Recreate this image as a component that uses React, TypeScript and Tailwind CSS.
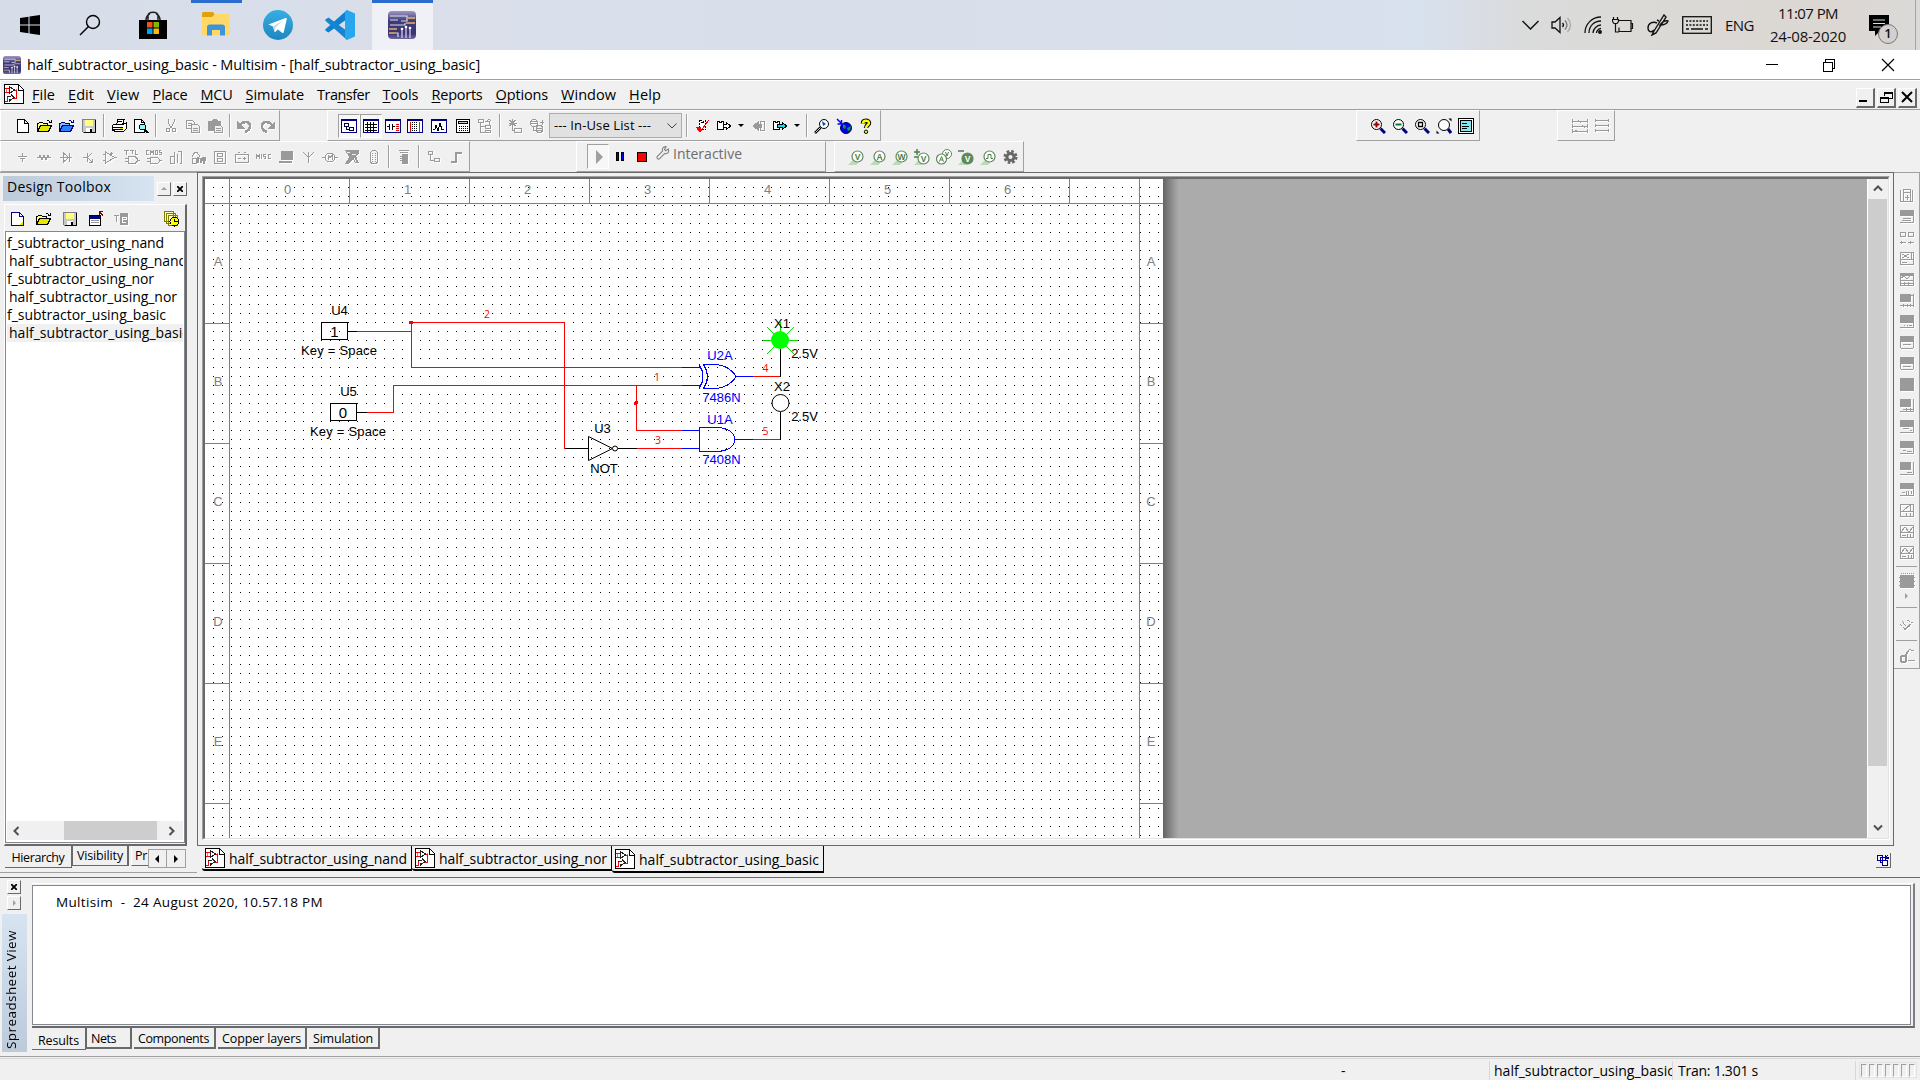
import { useLayoutEffect, useRef, useState, type ReactNode } from "react";

/* ---------- text fitted to a fixed run length ---------- */
function Label({ w, children, className = "", vertical = false }: { w: number; children: string; className?: string; vertical?: boolean }) {
  const ref = useRef<HTMLSpanElement>(null);
  const [spacing, setSpacing] = useState(0);
  useLayoutEffect(() => {
    const el = ref.current;
    if (!el) return;
    el.style.letterSpacing = "0px";
    const box = el.getBoundingClientRect();
    setSpacing((w - (vertical ? box.height : box.width)) / children.length);
  }, [w, children, vertical]);
  return (
    <span ref={ref} className={`inline-block whitespace-pre ${className}`} style={{ letterSpacing: `${spacing}px` }}>
      {children}
    </span>
  );
}

/* ---------- icon primitives ---------- */
const G = "#9a9a9a";
function Svg({ children, size = 16, soft = false, off = false }: { children: ReactNode; size?: number; soft?: boolean; off?: boolean }) {
  return (
    <svg
      width={size}
      height={size}
      viewBox="0 0 16 16"
      fill="none"
      stroke="#000"
      shapeRendering={soft ? "auto" : "crispEdges"}
      className={off ? "shrink-0 drop-shadow-[1px_1px_0_#fff]" : "shrink-0"}
    >
      {children}
    </svg>
  );
}

const icons: Record<string, ReactNode> = {
  new: <Svg><path d="M2.5 1.5h7l4 4v9h-11zM9.5 1.5v4h4" fill="#fff" /></Svg>,
  open: <Svg><path d="M.5 13.5v-8h1l1-1h3l1 1h4v2" fill="#ffff80" /><path d="M.5 13.5l3-6h11l-3 6z" fill="#e6e600" /><path d="M9.500 2.500h2l2 2M14.500 1.500v3h-3" /></Svg>,
  openBlue: <Svg><path d="M.5 13.500v-8h1l1-1h3l1 1h4v2" fill="#80c0ff" stroke="#000080" /><path d="M.5 13.500l3-6h11l-3 6z" fill="#2a80ff" stroke="#000080" /><path d="M9.500 2.500h2l2 2M14.500 1.500v3h-3" stroke="#000080" /></Svg>,
  save: <Svg><path d="M1.500 1.500h13v13h-12l-1-1z" fill="#c8c8c8" stroke="#808080" /><path d="M4 2h8v6H4z" fill="#ffff80" stroke="none" /><path d="M5 10h6v4H5z" fill="#fff" stroke="none" /><path d="M9 11h2v3H9z" fill="#000" stroke="none" /><path d="M14.500 2v12.500H3" /></Svg>,
  print: <Svg><path d="M5.500 6.500l1.500-5h6l-1.500 5M1.500 7.500l2-1.500h9l2.500-1v6l-2 2h-9l-2.500-1z" fill="#fff" /><path d="M2 9.500h10M2 11.500h10" strokeWidth="1.500" /><path d="M9 10.500h3" stroke="#e6e600" /><path d="M3 13.500h9l2-1M7 3.500h4" /></Svg>,
  preview: <Svg><path d="M1.500 1.500h7l3 3v10h-10z" fill="#fff" /><path d="M8.500 1.500v3h3" /><circle cx="9.500" cy="9" r="3" fill="#80ffff" /><path d="M11.500 11.500l4 3.500" strokeWidth="2" /></Svg>,
  cut: <Svg off><g stroke={G}><path d="M5 1v3l2 4 2 2M11 1v3l-2 4-2 2" /><circle cx="5" cy="12" r="2" /><circle cx="11" cy="12" r="2" /></g></Svg>,
  copy: <Svg off><g stroke={G}><path d="M1.500 2.500h6l2 2v6h-8zM3 5.500h4M3 7.500h4" /><path d="M6.500 6.500h6l2 2v6h-8zM8 10.500h5M8 12.500h5" fill="#f0f0f0" /></g></Svg>,
  paste: <Svg off><path d="M1 3h3l2-2h3l2 2h3v4H7v6H1z" fill={G} stroke="none" /><path d="M7.500 7.500h6l2 2v5h-8zM9 10.500h5M9 12.500h5" fill="#f0f0f0" stroke={G} /></Svg>,
  undo: <Svg off><path d="M3 7c3-4 10-4 10 1 0 3-2 5-5 6" stroke={G} strokeWidth="2.500" /><path d="M0 3v8h8z" fill={G} stroke="none" /></Svg>,
  redo: <Svg off><path d="M13 7C10 3 3 3 3 8c0 3 2 5 5 6" stroke={G} strokeWidth="2.500" /><path d="M16 3v8H8z" fill={G} stroke="none" /></Svg>,
  hier: <Svg><rect x=".5" y="1.500" width="15" height="13" fill="#fff" stroke="#000080" /><path d="M1 2.500h14" stroke="#000080" /><path d="M3.500 5.500h4v3h-4zM8.500 9.500h4v3h-4zM5.500 9v2.500h3" stroke="#000040" /></Svg>,
  grid: <Svg><rect x=".5" y="1.500" width="15" height="13" fill="#fff" stroke="#000080" /><path d="M1 2.500h14" stroke="#000080" /><path d="M2 6.500h12M2 9.500h12M2 12.500h12M4.500 4v10M7.500 4v10M10.500 4v10" /></Svg>,
  spice: <Svg><rect x=".5" y="1.500" width="15" height="13" fill="#fff" stroke="#000080" /><path d="M1 2.500h14" stroke="#000080" /><path d="M2 8.500h2M4.500 5.500v6M7.500 5.500v6M8 8.500h2" /><path d="M11 6.500h3M11 8.500h3M11 10.500h3M11 12.500h3" stroke="#e00000" /></Svg>,
  bread: <Svg><rect x=".5" y="1.500" width="15" height="13" fill="#fff" stroke="#000080" /><path d="M1 2.500h14" stroke="#000080" /><path d="M5.500 4v10M7.500 4v10M9.500 4v10" strokeDasharray="1 1" /><path d="M3.500 4v10" stroke="#e00000" /><path d="M12.500 4v10" stroke="#008080" /></Svg>,
  chart: <Svg><rect x=".5" y="1.500" width="15" height="13" fill="#fff" stroke="#000080" /><path d="M1 2.500h14" stroke="#000080" /><path d="M2 11.500h2l1-4 2 5 2-7 2 6h2" /></Svg>,
  calc: <Svg><rect x="1.500" y="1.500" width="13" height="13" fill="#fff" /><path d="M3.500 3.500h9v2h-9z" fill="#ccc" /><path d="M4 8.500h9M4 10.500h9M4 12.500h9" strokeDasharray="1 1" /></Svg>,
  tree: <Svg off><g stroke={G}><path d="M1.500 1.500h5v3h-5zM8.500 7.500h5v3h-5zM8.500 12.500h5v2h-5zM3.500 5v9h5M4 8.500h4M8 3.500h4v3M10 3l2-2 2 2" /></g></Svg>,
  star: <Svg off><g stroke={G}><path d="M5.500 1v8M1.500 5h8M2.500 2l6 6M8.500 2l-6 6M7.500 10.500h7v4h-7zM5.500 9v3.500h2" /></g></Svg>,
  db: <Svg off><g stroke={G}><circle cx="5" cy="5" r="3.500" /><path d="M2 5.500h6M2 3.500h6M11 4h4M13 1.500v5M4.500 9v3h3" /><circle cx="10.500" cy="11" r="3.500" fill="#f0f0f0" /><path d="M7 10.500h7M8 12.500h5" /></g></Svg>,
  erc: <Svg><path d="M5.500 2.500h2v2h2v-2h2v9h-6z" fill="#fff" strokeDasharray="2 1" /><path d="M4 11l2 3 9-12" stroke="#f00" /><path d="M2 9h5v2l-2 3z" fill="#f00" stroke="none" /></Svg>,
  fwd: <Svg><path d="M1.500 3.500h2v1h2v-1h2v3h3v-2l4 3.500-4 3.500v-2h-3v2h-6z" fill="#fff" /><path d="M7.500 6v5" /></Svg>,
  back: <Svg off><path d="M10.500 3.500h4v9h-4z" stroke={G} /><path d="M9 3v3h3v4H9v3L2 8z" fill={G} stroke="none" /></Svg>,
  fwdCyan: <Svg><path d="M1.500 3.500h2v1h2v-1h2v8h-6z" fill="#fff" /><path d="M5.500 6.500h5v-2l4 3.500-4 3.500v-2h-5z" fill="#00e5ff" /></Svg>,
  find: <Svg soft><circle cx="10" cy="6" r="4.500" fill="#fff" /><path d="M6.500 9.500L1 15" strokeWidth="2.500" /><path d="M6 10L1.500 14.500" stroke="#fff" strokeWidth=".8" /><path d="M8 3l4 3-3 2z" fill="#0050c0" stroke="none" /></Svg>,
  globe: <Svg soft><circle cx="10" cy="10" r="5.500" fill="#0000e0" stroke="#000060" /><path d="M7 6l3 2-1 3-2-1zM11 10l4-2-1 4-2 1z" fill="#00a040" stroke="none" /><path d="M1 1l4 4M5.500 2v4h-4" stroke="#00f" strokeWidth="1.500" /></Svg>,
  help: <Svg soft><path d="M5 5.500C5 2 11 2 11 5c0 2-3 2-3 5" stroke="#000" strokeWidth="4.500" /><path d="M5 5.500C5 2 11 2 11 5c0 2-3 2-3 5" stroke="#ff0" strokeWidth="2.500" /><circle cx="8" cy="13.800" r="1.700" fill="#ff0" stroke="#000" /></Svg>,
  zin: <Svg soft><circle cx="6.500" cy="6.500" r="5" fill="#fff" /><path d="M10.500 10.500l4.500 4.500" stroke="#000080" strokeWidth="3" /><path d="M3.500 6.500h6M6.500 3.500v6" stroke="#a00000" strokeWidth="2" /></Svg>,
  zout: <Svg soft><circle cx="6.500" cy="6.500" r="5" fill="#fff" /><path d="M10.500 10.500l4.500 4.500" stroke="#000080" strokeWidth="3" /><path d="M3.500 6.500h6" stroke="#008020" strokeWidth="2" /></Svg>,
  zarea: <Svg soft><circle cx="6.500" cy="6.500" r="5" fill="#fff" /><path d="M10.500 10.500l4.500 4.500" stroke="#000080" strokeWidth="3" /><path d="M4.500 4.500h4v4h-4z" strokeWidth="1.300" /></Svg>,
  zfit: <Svg soft><circle cx="8" cy="7" r="5.500" fill="#fff" /><path d="M12 11l3 4" stroke="#000080" strokeWidth="3" /><path d="M12.500.5h3v3zM.5 12.500v3h3z" fill="#000" stroke="none" /></Svg>,
  full: <Svg><rect x=".5" y=".5" width="15" height="15" fill="#fff" /><rect x="2.500" y="2.500" width="11" height="11" fill="#80e8f0" /><path d="M4 5.500h5M4 8h7M4 10.500h5" /></Svg>,
  conn1: <Svg off><path d="M.5 1v4M.5 3h15M15.500 1v4M.5 6v4M.5 8h15M15.500 6v4M.5 11v4M.5 13h15M15.500 11v4M6 2l3 3M10 7l3 3M3 12l3 2" stroke={G} /></Svg>,
  conn2: <Svg off><path d="M1.500 1v3M2 2.500h12M14.500 1v3M1.500 6v3M2 7.500h12M14.500 6v3M1.500 11v3M2 12.500h12M14.500 11v3" stroke={G} /></Svg>,
  src: <Svg off><path d="M8.500 4v3M4 7.500h9M6 9.500h5M8.500 10v3" stroke={G} /></Svg>,
  res: <Svg off><path d="M1 8.500h2l1-2 2 4 2-4 2 4 2-4 1 2h2" stroke={G} /></Svg>,
  diode: <Svg off><path d="M2 8.500h12M5.500 4v9l5-4.500zM11.500 4v9" stroke={G} /></Svg>,
  bjt: <Svg off><path d="M3 8.500h4M7.500 4v9M8 8l4-4M8 9l4 4M9 13h3v-3" stroke={G} /></Svg>,
  opamp: <Svg off><path d="M3.500 3v11l9-5.500zM1 5.500h2M1 11.500h2M12 8.500h3M9.500 3v3M8 4.500h3" stroke={G} /></Svg>,
  ttl: <Svg off><path d="M0 1.500h5M2.500 2v4M6 1.500h4M8.500 2v3M11.500 1v4h2M4.500 7.500h5c5 0 5 7 0 7h-5zM1 9.500h3M1 12.500h3M13 11h3" stroke={G} /></Svg>,
  cmos: <Svg off><path d="M3 1.500H.5v4H3M4.500 6V1.500l1.500 2 1.500-2V6M9.500 1.500h2v4h-2zM15 1.500h-2v2h2v2h-2M4.500 8.500h5c5 0 5 6 0 6h-5zM1 9.500h3M1 12.500h3M13 11h3" stroke={G} /></Svg>,
  misc1: <Svg off><path d="M2.500 7.500h4v7h-4zM6.500 3v11M9.500 14V5M9.500 2.500h4v12h-2" stroke={G} strokeWidth="1.500" /></Svg>,
  mixed: <Svg off><path d="M2 8l3-5h2l3 5" stroke={G} /><path d="M2.500 9.500h4v5h-4zM8 8v6M8 9.500h3V14M13 8v3h2V8M14 11v4" stroke={G} strokeWidth="1.500" /></Svg>,
  ind: <Svg off><path d="M2.500 2.500h11v12h-11zM5.500 4.500h5v3h-5zM5.500 9.500h5v3h-5z" stroke={G} /></Svg>,
  power: <Svg off><path d="M1.500 5.500h13v8h-13zM4 3.500h2M10 3.500h2M4 9.500h3M9 9.500h3M10.500 8v3" stroke={G} /></Svg>,
  misc: <Svg off><path d="M.5 10V5.500l1.500 2 1.500-2V10M5.500 5v5M9.500 5.500h-2v2h2v2h-2M15 5.500h-3v4h3" stroke={G} /></Svg>,
  lcd: <Svg off><path d="M3 2h12v9H3zM1 12h13v2H1z" fill={G} stroke="none" /></Svg>,
  rf: <Svg off><path d="M8.500 3v11M3 3l5 5M14 3L9 8" stroke={G} /></Svg>,
  motor: <Svg off><circle cx="8" cy="8.500" r="4.500" stroke={G} /><path d="M0 8.500h3M13 8.500h3M6 11V6.500l2 2 2-2V11" stroke={G} /></Svg>,
  conn: <Svg off><path d="M1 1h14v3l-3 3 3 7h-4l-2-4-5 5H1l4-7z" fill={G} stroke="none" /><path d="M3 3.500h3M8 5.500h4M10 9l2 4" stroke="#f0f0f0" /></Svg>,
  plug: <Svg off><rect x="4.500" y="1.500" width="7" height="13" rx="3" stroke={G} /><path d="M6.500 4v9M9.500 4v9" strokeDasharray="1 1" stroke={G} /></Svg>,
  mcu: <Svg off><path d="M3 1.500h10M4 3.500h8M6 5h5v9H6z" fill={G} stroke={G} /><path d="M4 7.500h8M4 9.500h8M4 11.500h8" stroke={G} /></Svg>,
  block: <Svg off><path d="M2.500 2.500h4v3h-4zM8.500 9.500h5v3h-5zM4.500 6v5h4" stroke={G} /></Svg>,
  bus: <Svg off><path d="M3 13h5V4h6" stroke={G} strokeWidth="2" /></Svg>,
  wrench: <Svg soft><path d="M14 3.500l-3 2-1.500-1.500L11.500 1C8 .5 6.500 3.500 7.500 6L1.500 12c-1 1.500 1 3.500 2.500 2.500L10 8.500c3 1 5.500-1.500 4-5z" stroke="#808080" strokeWidth="1.200" /></Svg>,
};

function Probe({ t, extra }: { t: string; extra?: string }) {
  const solid = extra === "f";
  return (
    <Svg soft>
      <path d="M0 16l6-6 4 4-2 2z" fill="#b9dcb4" stroke="none" />
      <circle cx="9.500" cy={extra ? 9.5 : 7.5} r="5.500" fill={solid ? "#5b8a57" : "#fff"} stroke="#5f8a5a" strokeWidth="1.200" />
      {extra && <path d={solid ? "M0 2h6" : "M0 3h6M3 0v6M0 8h4"} stroke="#4d7d48" strokeWidth="1.500" />}
      <text x="9.500" y={extra ? 12.6 : 10.6} textAnchor="middle" fontSize="8.500" fontWeight="700" fontFamily="Liberation Sans, sans-serif" stroke="none" fill={solid ? "#fff" : "#4d7d48"}>{t}</text>
    </Svg>
  );
}

const Cell = ({ name }: { name: string }) => <div className="flex h-full w-[22px] shrink-0 items-center justify-center">{icons[name]}</div>;
const Cells = ({ names }: { names: string }) => <>{names.split(" ").map((n, i) => (n === "|" ? <Sep key={i} /> : <Cell key={i} name={n} />))}</>;
const Sep = () => <div className="flex h-full w-2 shrink-0 justify-center py-[3px]"><div className="w-px bg-[#a0a0a0]" /><div className="w-px bg-white" /></div>;
const Drop = () => <div className="flex w-3 justify-center"><div className="border-x-[3px] border-t-[3px] border-x-transparent border-t-black" /></div>;
const Band = ({ children, className }: { children: ReactNode; className: string }) => (
  <div className={`flex shrink-0 items-center border-b border-r border-b-[#a0a0a0] border-r-[#a0a0a0] border-l border-t border-l-white border-t-white ${className}`}>{children}</div>
);
const Pressed = ({ name }: { name: string }) => (
  <div className="flex h-[24px] w-[22px] shrink-0 items-center justify-center border border-b-white border-l-[#a0a0a0] border-r-white border-t-[#a0a0a0] bg-[#f7f7f7]">{icons[name]}</div>
);

/* ---------- taskbar ---------- */
function ChipLogo({ size }: { size: number }) {
  return (
    <svg width={size} height={size} viewBox="0 0 28 28" fill="none" className="shrink-0">
      <defs><linearGradient id="chip" x2="0" y2="1"><stop stopColor="#9c9ac0" /><stop offset=".35" stopColor="#3f3a78" /><stop offset=".8" stopColor="#3a3572" /><stop offset="1" stopColor="#6d68a0" /></linearGradient></defs>
      <rect width="28" height="28" rx="4" fill="url(#chip)" />
      <path d="M2 5h17v5h-6M2 9h8M2 14h15v-2M14 27v-8M18 27v-10M22 27v-9M10 26v-4H7" stroke="#dcdaf0" strokeWidth="1.200" />
      <path d="M20 7h7M18 12h9M1 18h8M1 22h6" stroke="#e5b266" strokeWidth="1.300" />
      <g fill="#fff"><circle cx="18" cy="16" r="1.300" /><circle cx="22" cy="17" r="1.300" /><circle cx="14" cy="18" r="1.300" /></g>
    </svg>
  );
}

function Taskbar() {
  return (
    <div className="flex h-[50px] shrink-0 bg-[linear-gradient(90deg,#d6dde9_0%,#dadfea_25%,#d8dfea_50%,#d8e1ee_74%,#dadbdc_79%,#dbdad7_85%,#dcd7d3_96%,#dbdad8_100%)]">
      <div className="flex w-[60px] items-center justify-center">
        <svg width="20" height="20" viewBox="0 0 20 20"><path d="M0 3l8.500-1.200V9.500H0zM9.500 1.600L20 0v9.500H9.500zM0 10.500h8.500v7.700L0 17zM9.500 10.500H20V20L9.500 18.400z" /></svg>
      </div>
      <div className="flex w-[60px] items-center justify-center">
        <svg width="22" height="22" viewBox="0 0 22 22" fill="none" stroke="#000" strokeWidth="1.400"><circle cx="14" cy="8" r="6.500" /><path d="M9.500 12.500L1 21" /></svg>
      </div>
      <div className="flex w-[66px] items-center justify-center">
        <svg width="30" height="30" viewBox="0 0 30 30"><path d="M1 10h28v19H1z" /><path d="M10 11V6c0-5 10-5 10 0v5M8 10c0-3 2-6 4-6M22 10c0-3-2-6-4-6" fill="none" stroke="#222" strokeWidth="1.500" /><path d="M9 12h5.500v5.500H9z" fill="#f25022" /><path d="M15.500 12H21v5.500h-5.500z" fill="#7fba00" /><path d="M9 18.500h5.500V24H9z" fill="#00a4ef" /><path d="M15.500 18.500H21V24h-5.500z" fill="#ffb900" /></svg>
      </div>
      <div className="flex w-[60px] justify-center">
        <div className="flex h-full w-[51px] justify-center border-t-[3px] border-[#2a6dcf] pt-[9px]">
          <svg width="28" height="24" viewBox="0 0 28 24"><path d="M0 1.500C0 .7.700 0 1.500 0H11l2 3-2 4H0z" fill="#e3a008" /><path d="M0 5h10l3-3h13c1 0 1.500.5 1.500 1.500V23H0z" fill="#ffd868" /><path d="M5 23.500V15c0-1.500 1-2.500 2.500-2.500h13c1.500 0 2.500 1 2.500 2.500v8.500h-5V18h-8v5.500z" fill="#3f93d8" /></svg>
        </div>
      </div>
      <div className="flex w-16 items-center justify-center">
        <svg width="30" height="30" viewBox="0 0 30 30"><defs><linearGradient id="tg" x2="0" y2="1"><stop stopColor="#37aee2" /><stop offset="1" stopColor="#1e86c0" /></linearGradient></defs><circle cx="15" cy="15" r="15" fill="url(#tg)" /><path d="M5.500 14.500L22.500 8c1-.3 1.500.2 1.200 1.200L20.800 22c-.2 1-.9 1.200-1.700.7l-4.300-3.200-2.300 2.300c-.5.400-1 .3-1.100-.4L10 16.500z" fill="#fff" /><path d="M10 16.500l10-6.200-7.500 7.200-.6 4.300z" fill="#c3d9ea" /></svg>
      </div>
      <div className="flex w-[60px] items-center justify-center">
        <svg width="30" height="30" viewBox="0 0 30 30"><path d="M22 0v9L3.500 22.500 1 21c-1-.8-1-1.500 0-2.300z" fill="#0f7fcf" /><path d="M22 30v-9L3.500 7.500 1 9c-1 .8-1 1.500 0 2.300z" fill="#1585d2" /><path d="M22 0l8 3.500v23L22 30l-2-1.500V1.500z" fill="#29a7ee" /></svg>
      </div>
      <div className="ml-[2px] flex w-[61px] justify-center border-t-[3px] border-[#2a6dcf] bg-[#eff1f6] pr-[2px] pt-2">
        <ChipLogo size={28} />
      </div>
      <div className="flex-1" />
      <div className="flex items-center text-[#111]">
        <svg className="mr-px" width="17" height="10" viewBox="0 0 17 10" fill="none" stroke="#111" strokeWidth="1.500"><path d="M.5 1l8 8 8-8" /></svg>
        <svg className="ml-[11px]" width="22" height="20" viewBox="0 0 22 20" fill="none" stroke="#111" strokeWidth="1.300"><path d="M1 7h3l5-4.500v15L4 13H1z" /><path d="M11.500 8q2 2 0 4" /><path d="M14 5.500q4 4.500 0 9" stroke="#777" /><path d="M16.500 3q6 7 0 14" stroke="#aaa" /></svg>
        <svg className="ml-[11px]" width="18" height="18" viewBox="0 0 18 18" fill="none" stroke="#111" strokeWidth="1.300"><path d="M1 17C1 8 8 1 17 1M5 17C5 10 10 5 17 5M9 17c0-4 4-8 8-8M12.500 17c0-2 2-4.500 4.500-4.500" /><circle cx="16" cy="16" r="1.300" fill="#111" /></svg>
        <svg className="ml-[10px]" width="22" height="18" viewBox="0 0 22 18" fill="none" stroke="#111" strokeWidth="1.200"><path d="M7 4.500h12v11H7v-4M19 7.500h1.500v5H19M1.500 1v2M5.500 1v2M.5 3.500h6v2l-1.500 2H2L.5 5.500zM3.500 7.500V16H7" /></svg>
        <svg className="ml-[13px]" width="22" height="22" viewBox="0 0 22 22" fill="none" stroke="#111" strokeWidth="1.400"><path d="M7 17L17 1l2 2L9 19l-4 2zM10 9c-4-2-9 0-9 5 0 4 4 5 6 2M13 11c4 0 7-1 8-4-3-1-5 0-8 4zM12 7l-2-1" /></svg>
        <svg className="ml-[13px]" width="30" height="18" viewBox="0 0 30 18" fill="none" stroke="#111" strokeWidth="1.300"><rect x=".7" y=".7" width="28.600" height="16.600" /><path d="M4 5h22M4 9h22" strokeDasharray="2 1.400" /><path d="M4 13h3M9 13h12M23 13h3" /></svg>
        <Label w={29} className="ml-[13px] text-[15px]">ENG</Label>
        <div className="ml-4 flex w-[76px] flex-col items-center text-[15px] leading-[23px]">
          <Label w={60}>11:07 PM</Label>
          <Label w={76}>24-08-2020</Label>
        </div>
        <div className="relative ml-[23px] h-[50px] w-[46px]">
          <svg className="absolute left-0 top-[15px]" width="21" height="21" viewBox="0 0 21 21"><path d="M0 0h20v16h-9l-5 5v-5H0z" /><path d="M4 5h12M4 8.500h12M4 12h8" stroke="#ddd" strokeWidth="1.200" /></svg>
          <div className="absolute left-[9px] top-6 flex size-5 items-center justify-center rounded-full border border-[#777] bg-[#d3d1cf] text-[13px] font-semibold">1</div>
        </div>
        <div className="h-[50px] w-[5px] border-l border-[#a8a6a4]" />
      </div>
    </div>
  );
}

/* ---------- title, menus ---------- */
type Menu = [before: string, key: string, after: string, width: number];
const menus: Menu[] = [
  ["", "F", "ile", 23], ["", "E", "dit", 26], ["", "V", "iew", 32.5], ["", "P", "lace", 35], ["", "M", "CU", 32], ["", "S", "imulate", 58.5],
  ["Tra", "n", "sfer", 52.5], ["", "T", "ools", 36], ["", "R", "eports", 51], ["", "O", "ptions", 52.5], ["", "W", "indow", 55], ["", "H", "elp", 32],
];

function MenuWord({ m: [a, k, b, w] }: { m: Menu }) {
  const ref = useRef<HTMLSpanElement>(null);
  const [spacing, setSpacing] = useState(0);
  useLayoutEffect(() => {
    if (ref.current) setSpacing((w - ref.current.getBoundingClientRect().width) / (a + k + b).length);
  }, []);
  return <span ref={ref} className="inline-block" style={{ letterSpacing: `${spacing}px` }}>{a}<span className="underline decoration-1 underline-offset-2">{k}</span>{b}</span>;
}

function CircuitDoc() {
  return (
    <svg width="21" height="21" viewBox="0 0 21 21" fill="none" shapeRendering="crispEdges" className="shrink-0">
      <path d="M.5.500h14l5 5v14h-19z" fill="#fff" stroke="#000" />
      <path d="M14.500 1v5h5" stroke="#000" />
      <path d="M1 4.500h4M1 8.500h4M10 6.500h2v8h-4M3.500 12v6M1 17.500h3" stroke="#f00" />
      <path d="M12.500 5v9M2.500 5v3" stroke="#f00" strokeOpacity=".6" />
      <path d="M5.500 2.500v7l5-3.500zM3 12.500h4M7 10.500l3 3-5 4M5 15.500h3" stroke="#222" />
    </svg>
  );
}

const MdiBtn = ({ children }: { children: ReactNode }) => (
  <div className="flex h-5 w-[19px] items-center justify-center border border-b-2 border-r-2 border-b-[#696969] border-l-white border-r-[#696969] border-t-white">{children}</div>
);

function Header() {
  return (
    <>
      <div className="flex h-[29px] shrink-0 items-center bg-white">
        <div className="ml-[3px]"><ChipLogo size={18} /></div>
        <Label w={453} className="ml-[6px] text-[14.500px] leading-5">half_subtractor_using_basic - Multisim - [half_subtractor_using_basic]</Label>
        <div className="flex-1" />
        <svg width="130" height="14" viewBox="0 0 130 14" fill="none" stroke="#000" className="mr-[25px]" shapeRendering="crispEdges">
          <path d="M1 6.500h12M58.500 4.500h9v9h-9zM60.500 4V1.500h9v9h-2" />
          <path d="M117 1l12 12M129 1L117 13" shapeRendering="auto" strokeWidth="1.200" />
        </svg>
      </div>
      <div className="flex h-[30px] shrink-0 items-center border-t border-[#a0a0a0] shadow-[inset_1px_1px_0_#fff]">
        <div className="ml-1"><CircuitDoc /></div>
        <div className="ml-[7px] flex gap-[13px] text-[14.500px]">{menus.map((m) => <MenuWord key={m[1] + m[2]} m={m} />)}</div>
        <div className="flex-1" />
        <div className="mr-[3px] flex gap-[2px] pt-[6px]">
          <MdiBtn><div className="mt-2 h-[2px] w-2 -translate-x-[2px] bg-black" /></MdiBtn>
          <MdiBtn><svg width="13" height="13" viewBox="0 0 13 13" fill="none" stroke="#000" shapeRendering="crispEdges"><path d="M4.500 5V1.500h8v6H9M4 2h9M.5 6.500h8v5h-8zM1 7h8" /></svg></MdiBtn>
          <MdiBtn><svg width="12" height="12" viewBox="0 0 12 12" stroke="#000" strokeWidth="2"><path d="M1 1l10 10M11 1L1 11" /></svg></MdiBtn>
        </div>
      </div>
    </>
  );
}

function Toolbars() {
  return (
    <>
      <div className="flex h-8 shrink-0 border-t border-[#a0a0a0]">
        <Band className="w-[280px] pl-[11px]"><Cells names="new open openBlue save | print preview | cut copy paste | undo redo" /></Band>
        <Band className="ml-[47px] w-[554px] pl-[10px]">
          <Pressed name="hier" /><Pressed name="grid" /><Cells names="spice bread" />
          <div className="flex w-[26px] justify-center">{icons.chart}</div>
          <Cells names="calc tree | star db" />
          <div className="mx-px flex h-[25px] w-[133px] shrink-0 items-center border border-[#adadad] bg-[#e1e1e1] pl-1 text-[13px]">
            <Label w={97}>--- In-Use List ---</Label>
            <svg className="ml-[16px]" width="10" height="6" viewBox="0 0 10 6" fill="none" stroke="#444"><path d="M.5.5L5 5 9.500.5" /></svg>
          </div>
          <Sep /><Cells names="erc fwd" /><Drop /><Cells names="back fwdCyan" /><Drop /><Cells names="| find globe help" />
        </Band>
        <Band className="ml-[475px] w-[124px] pl-[10px]"><Cells names="zin zout zarea zfit full" /></Band>
        <Band className="ml-[77px] w-[58px] pl-[11px]"><Cells names="conn1 conn2" /></Band>
      </div>
      <div className="flex h-[31px] shrink-0">
        <Band className="w-[470px] pl-[10px]"><Cells names="src res diode bjt opamp ttl cmos misc1 mixed ind power misc lcd rf motor conn plug | mcu | block bus" /></Band>
        <Band className="ml-[106px] w-[250px] pl-[10px]">
          <div className="flex h-[25px] w-[22px] items-center justify-center border border-b-white border-l-[#a0a0a0] border-r-white border-t-[#a0a0a0] bg-[#f7f7f7]"><div className="ml-[2px] border-y-[7px] border-l-[7px] border-y-transparent border-l-[#a0a0a0]" /></div>
          <div className="flex w-[22px] justify-center gap-[2px]"><div className="h-[9px] w-[3px] border border-black bg-[#00f]" /><div className="h-[9px] w-[3px] border border-black bg-[#00f]" /></div>
          <div className="flex w-[22px] justify-center"><div className="size-[10px] border border-black bg-[#f00]" /></div>
          <div className="flex w-5 justify-center pb-1"><div className="-translate-y-[2px] scale-90">{icons.wrench}</div></div>
          <Label w={69} className="pb-[5px] text-[14px] leading-5 text-[#6d6d6d]">Interactive</Label>
        </Band>
        <Band className="ml-[8px] w-[190px] pl-[10px]">
          {[["V"], ["A"], ["W"], ["V", "p"], ["AV"], ["V", "f"], ["pulse"]].map(([t, e], i) => (
            <div key={i} className="flex w-[22px] shrink-0 justify-center">{t === "pulse" ? (
              <Svg soft><path d="M0 16l6-6 4 4-2 2z" fill="#b9dcb4" stroke="none" /><circle cx="9.500" cy="7.500" r="5.500" fill="#fff" stroke="#5f8a5a" strokeWidth="1.200" /><path d="M6 9.500h2v-4h3v4h2" stroke="#4d7d48" /></Svg>
            ) : t === "AV" ? (
              <Svg soft><circle cx="11" cy="5" r="4.500" fill="#fff" stroke="#5f8a5a" /><circle cx="5.500" cy="10" r="5" fill="#fff" stroke="#5f8a5a" strokeWidth="1.200" /><path d="M3.500 12.500l2-5 2 5M4.500 11h2M9.500 3l1.500 4 1.500-4" stroke="#4d7d48" /></Svg>
            ) : <Probe t={t} extra={e} />}</div>
          ))}
          <div className="flex w-[22px] justify-center"><Svg soft><circle cx="8.500" cy="8" r="5.800" stroke="#666" strokeWidth="2.500" strokeDasharray="2.600 1.950" /><circle cx="8.500" cy="8" r="3.600" stroke="#666" strokeWidth="3" /></Svg></div>
        </Band>
      </div>
    </>
  );
}

/* ---------- design toolbox ---------- */
const files = [
  ["f_subtractor_using_nand", 157, false], ["half_subtractor_using_nand", 178, true], ["f_subtractor_using_nor", 147, false],
  ["half_subtractor_using_nor", 168, true], ["f_subtractor_using_basic", 159, false], ["half_subtractor_using_basic", 180, true],
] as const;
const MiniBtn = ({ children }: { children: ReactNode }) => (
  <div className="flex size-[14px] shrink-0 items-center justify-center border border-b-[#696969] border-l-white border-r-[#696969] border-t-white">{children}</div>
);
const MiniX = () => <svg width="6" height="6" viewBox="0 0 6 6" stroke="#000" strokeWidth="1.800"><path d="M0 0l6 6M6 0L0 6" /></svg>;

function DesignToolbox() {
  return (
    <div className="flex h-[701px] w-[197px] shrink-0 flex-col border-b border-t border-[#a0a0a0]">
      <div className="mt-[3px] flex h-[25px] shrink-0 items-center">
        <div className="ml-[3px] flex h-[25px] w-[151px] items-center bg-[linear-gradient(90deg,#bccada,#d6e4f2)] pl-[4px]">
          <Label w={104} className="pb-1 text-[14px]">Design Toolbox</Label>
        </div>
        <div className="ml-[3px] flex gap-[2px]">
          <MiniBtn><div className="border-x-[3px] border-b-[3px] border-x-transparent border-b-[#a0a0a0]" /></MiniBtn>
          <MiniBtn><MiniX /></MiniBtn>
        </div>
      </div>
      <div className="ml-1 mt-[3px] flex h-[642px] w-[183px] shrink-0 flex-col border-b-2 border-l border-r-2 border-t border-b-[#696969] border-l-white border-r-[#696969] border-t-white">
        <div className="flex h-[26px] shrink-0 items-center pl-[5px] pt-px">
          <Svg><path d="M1.500 1.500h8l4 4v9h-12z" fill="#fff" stroke="#000080" /><path d="M9.500 1.500v4h4" stroke="#000080" /><path d="M9 14l4-4v4z" fill="#e6e600" stroke="none" /></Svg>
          <div className="ml-[10px]">{icons.open}</div>
          <div className="ml-[10px]">{icons.save}</div>
          <div className="ml-[11px]"><Svg><path d="M.5 4.500h11v10H.5z" fill="#fff" stroke="#000" /><path d="M1 6h10" stroke="#000080" strokeWidth="3" /><path d="M2 9.500h8M2 11.500h8" stroke="#999" /><path d="M14 5l-3-4M10.500 4V.5H14" stroke="#800000" /></Svg></div>
          <div className="ml-[9px]"><Svg off><path d="M0 4.500h5M2.500 5v6" stroke={G} /><path d="M6 2h8v12H6z" fill={G} stroke="none" /><path d="M12 11H8V6h4v2.500H8" stroke="#fff" /></Svg></div>
          <div className="ml-[34px]"><Svg><path d="M.5.500h9v10h-9zM2.500 2.500h9v10h-9zM4.500 4.500h9v10h-9z" fill="#ffffc0" stroke="#808000" /><circle cx="10.500" cy="10.500" r="4.500" fill="#ff0" /><path d="M10.500 7.500v3h3" /></Svg></div>
        </div>
        <div className="flex h-[612px] w-[180px] flex-col border border-[#828790] bg-white px-px pb-[2px]">
          <div className="flex-1 overflow-hidden pt-[2px] text-[14px] leading-[18px]">
            {files.map(([t, w, child], i) => (
              <div key={t} className={`h-[18px] overflow-hidden ${child ? "pl-[2px]" : ""} ${i === 5 ? "bg-[#f0f0f0]" : ""}`}><Label w={w}>{t}</Label></div>
            ))}
          </div>
          <div className="flex h-[19px] shrink-0 items-center bg-[#f0f0f0]">
            <svg className="ml-[5px]" width="8" height="10" viewBox="0 0 8 10" fill="none" stroke="#505050" strokeWidth="2"><path d="M6.500 1l-4 4 4 4" /></svg>
            <div className="ml-[44px] h-full w-[93px] bg-[#cdcdcd]" />
            <svg className="ml-[11px]" width="8" height="10" viewBox="0 0 8 10" fill="none" stroke="#505050" strokeWidth="2"><path d="M1.500 1l4 4-4 4" /></svg>
          </div>
        </div>
      </div>
      <div className="flex items-start pl-[5px] text-[12.500px]">
        <div className="flex h-[22px] w-[67px] items-center justify-center border-b border-r border-[#696969] pt-1"><Label w={53}>Hierarchy</Label></div>
        <div className="flex h-[20px] w-[57px] items-center justify-center border-b border-l border-r-2 border-[#696969] pt-px"><Label w={46}>Visibility</Label></div>
        <div className="ml-[2px] flex h-[20px] w-[17px] items-center border-b border-l border-b-[#696969] border-l-white pl-[3px] pt-px"><Label w={12}>Pr</Label></div>
        <div className="mt-[3px] flex h-[19px] w-[38px] border border-[#a0a0a0]">
          <div className="flex w-1/2 items-center justify-center border-r border-[#a0a0a0] pr-px"><div className="border-y-4 border-r-4 border-y-transparent border-r-black" /></div>
          <div className="flex w-1/2 items-center justify-center"><div className="border-y-4 border-l-4 border-y-transparent border-l-black" /></div>
        </div>
      </div>
    </div>
  );
}

/* ---------- schematic sheet ---------- */
const cols = [0, 1, 2, 3, 4, 5, 6];
const rows = ["A", "B", "C", "D", "E"];

function Schematic() {
  return (
    <svg width="958" height="659" viewBox="205 179 958 659" fill="none" className="shrink-0 bg-white" shapeRendering="crispEdges" fontFamily="Liberation Sans, sans-serif" fontSize="13">
      <defs><pattern id="dots" x="213" y="187" width="9" height="9" patternUnits="userSpaceOnUse"><rect width="1" height="1" fill="#000" /></pattern></defs>
      <rect x="213" y="187" width="948" height="651" fill="url(#dots)" />
      <g stroke="#808080">
        <path d="M205 203.500h958M229.500 179v659M1139.500 179v659" />
        {cols.map((c) => <path key={c} d={`M${349.5 + c * 120} 179v24`} />)}
        {rows.map((r, i) => <path key={r} d={`M205 ${323.5 + i * 120}h24M1139 ${323.5 + i * 120}h24`} />)}
      </g>
      <g fill="#808080" textAnchor="middle">
        {cols.map((c) => <text key={c} x={287.5 + c * 120} y="194">{c}</text>)}
        {rows.map((r, i) => <text key={r} x="218" y={266 + i * 120}>{r}</text>)}
        {rows.map((r, i) => <text key={r} x="1151" y={266 + i * 120}>{r}</text>)}
      </g>
      <g stroke="#f00">
        <path d="M357 331.500h54.500M411.500 322v45.500H682M411.500 322.500h153v126M367 412.500h26.500v-27H682M636.500 385.500v45H682M637 448.500h45M753 376.500h27M753 439.500h27" />
      </g>
      <g fill="#f00"><circle cx="411" cy="322.500" r="2" /><circle cx="636" cy="403" r="2" /></g>
      <g stroke="#000">
        <rect x="321.500" y="322.500" width="26" height="17" /><path d="M348 331.500h9" />
        <rect x="330.500" y="403.500" width="26" height="17" fill="#fff" /><path d="M357 412.500h10" />
        <path d="M565 448.500h23M618 448.500h19M780.500 349v28M780.500 412v28" />
        <path d="M588.500 436.500v24l24-12z" shapeRendering="auto" />
        <circle cx="615" cy="448.500" r="2.500" fill="#fff" shapeRendering="auto" />
        <circle cx="780.500" cy="403" r="8.500" fill="#fff" shapeRendering="auto" />
      </g>
      <g stroke="#00f">
        <path d="M682 367.500h19M682 385.500h19M737 376.500h16M682 430.500h17M682 448.500h17M735 439.500h18" />
        <path d="M699.500 427.500h17c8 0 18 3 18 12s-10 12-18 12h-17z" />
        <path d="M703.500 364.500h11c10 0 17 5 22 12-5 7-12 12-22 12h-11q8-12 0-24M699 364.500q8 12 0 24" />
      </g>
      <path d="M763 340.500h35M780.500 322v18M767 327l27 27M794 327l-27 27" stroke="#0d0" shapeRendering="auto" />
      <circle cx="780" cy="340" r="9" fill="#0f0" shapeRendering="auto" />
      <g fill="#000" textAnchor="middle" shapeRendering="auto">
        <text x="339.500" y="315">U4</text><text x="339" y="355" textLength="76">Key = Space</text>
        <text x="334.500" y="337" fontSize="15">1</text>
        <text x="348.500" y="396">U5</text><text x="348" y="436" textLength="76">Key = Space</text>
        <text x="343" y="418" fontSize="15">0</text>
        <text x="602.500" y="433">U3</text><text x="604" y="473">NOT</text>
        <text x="782" y="328">X1</text><text x="782" y="391">X2</text>
        <text x="804.500" y="358">2.5V</text><text x="804.500" y="421">2.5V</text>
      </g>
      <g fill="#00f" textAnchor="middle">
        <text x="720" y="360">U2A</text><text x="721.500" y="402">7486N</text>
        <text x="720" y="424">U1A</text><text x="721.500" y="464">7408N</text>
      </g>
      <g fill="#f00" textAnchor="middle" fontSize="10.500" fontFamily="Open Sans, sans-serif">
        <text x="487" y="318">2</text><text x="657" y="381">1</text><text x="658" y="444">3</text><text x="765.500" y="372">4</text><text x="765.500" y="435">5</text>
      </g>
    </svg>
  );
}

const docs = [["half_subtractor_using_nand", 178, "h-[25px] w-[210px] pt-px"], ["half_subtractor_using_nor", 168, "h-[25px] w-[200px] pt-px"], ["half_subtractor_using_basic", 180, "h-[27px] w-[212px] pt-px"]] as const;

function Workspace() {
  return (
    <div className="flex w-[1697px] shrink-0 flex-col">
      <div className="h-[673px] shrink-0 border-l border-r border-t border-[#696969] pl-1 pt-[3px]">
        <div className="h-[664px] w-[1688px] border border-b-white border-l-[#a0a0a0] border-r-white border-t-[#a0a0a0]">
          <div className="flex h-[662px] border-b border-l-2 border-r border-t-2 border-b-[#e3e3e3] border-l-[#696969] border-r-[#e3e3e3] border-t-[#696969]">
            <Schematic />
            <div className="w-[704px] shrink-0 bg-[linear-gradient(90deg,#646464_0,#808080_6px,#a0a0a0_13px,#ababab_16px)]" />
            <div className="flex w-[21px] shrink-0 flex-col items-center border-l border-white bg-[#f0f0f0] pr-px">
              <svg className="h-[20px] shrink-0" width="10" viewBox="0 0 10 20" fill="none" stroke="#505050" strokeWidth="2"><path d="M1 11.500l4-4 4 4" /></svg>
              <div className="h-[567px] w-full shrink-0 bg-[#cdcdcd]" />
              <div className="flex-1" />
              <svg className="h-[20px] shrink-0" width="10" viewBox="0 0 10 20" fill="none" stroke="#505050" strokeWidth="2"><path d="M1 7.500l4 4 4-4" /></svg>
            </div>
          </div>
        </div>
      </div>
      <div className="flex flex-1 items-start border-t border-[#696969] pl-[5px]">
        {docs.map(([t, w, c]) => (
          <div key={t} className={`flex shrink-0 items-center rounded-bl-[3px] border-b-2 border-r border-b-black border-r-black bg-[#f0f0f0] pl-[3px] ${c}`}>
            <CircuitDoc /><Label w={w} className="ml-[3px] pt-[2px] text-[14px] leading-5">{t}</Label>
          </div>
        ))}
        <div className="flex-1" />
        <div className="mr-[3px] mt-[7px] flex size-[15px] items-center justify-center border-b border-r border-[#696969]">
          <svg width="12" height="12" viewBox="0 0 12 12" fill="none" stroke="#0000a0" strokeWidth="1.200" shapeRendering="crispEdges"><path d="M.5 1.500h5v5h-5zM3.500 3.500h5v5h-5z" /><path d="M5.500 6.500h5v5h-5z" fill="#fff" /><path d="M8 4l3-3M8.500 1v3h3" /></svg>
        </div>
      </div>
    </div>
  );
}

/* ---------- instruments ---------- */
const instruments: [fill: number, path: string][] = [
  [0, "M1.500 2v11h2M13.500 2v11h-2M4.500 1.500h7v12h-7zM5 4h6M6 9h4M8 7v5"],
  [6, "M1 13.500h14M14.500 7v7M4 9.500h8M3 11.500h9"],
  [0, "M1.500 2.500h5v4h-5zM9.500 2.500h5v4h-5zM1 12.500h6M9 12.500h6M2 11v3M11 11v3"],
  [0, "M1.500 1.500h13v12h-13zM2 8.500h13M3 3l7 4M3 7l7-4M12 2v6M3 11.500h5"],
  [3, "M1.500 1.500h13v12h-13zM2 6l3-2 3 3 3-3M2 8.500h13M2 11.500h13M5 10v3M9 10v3"],
  [8, "M12 2.500h2v6M1 12.500h13M14.500 1v13M4 11v3M8 11v3M11 11v3"],
  [8, "M1 13.500h14M14.500 8v6M5 11.500h1M8 11.500h1M10 11.500h3"],
  [6, "M1 7v6M14.500 7v6M4 9.500h8M2 13.500h12"],
  [7, "M1 7v6M14.500 7v6M4 10.500h8M2 13.500h12"],
  [13, "M1.500 1v13"],
  [8, "M14.500 1v13M4 11.500h10M1 13.500h14M7 10v4M11 10v4"],
  [7, "M1 13.500h14M14.500 7v7M4 9.500h6M11 11.500h2"],
  [7, "M1 13.500h14M14.500 7v7M4 10.500h3M8 11.500h5"],
  [8, "M14.500 1v13M1 13.500h14M8 11.500h5"],
  [6, "M1 13.500h14M14.500 7v7M3 10.500h3M7 9v4M9 9v4M12 9v3"],
  [0, "M1.500 1.500h13v12h-13zM4 8l7-6M11 2v6M2 8.500h13M7 10v4M11 10v3"],
  [0, "M1.500 1.500h13v12h-13zM2 8l4-5 4 5 4-5M2 8.500h13M3 11.500h4M8 10v4M11 10v3"],
  [0, "M1.500 1.500h13v12h-13zM2 8l4-5 4 5 4-5M2 8.500h13M3 11.500h4M9 10v4M12 10v3"],
];

function Instruments() {
  return (
    <div className="flex h-[497px] w-[26px] flex-col items-center border-b border-r border-t border-[#a0a0a0] pt-[12px]">
      {instruments.map(([h, d], i) => (
        <div key={i} className="flex h-[21px] shrink-0 items-center"><Svg off>{h > 0 && <rect x="1" y="1" width={i === 5 || i === 10 || i === 13 ? 11 : 14} height={h} fill={G} stroke="none" />}<path d={d} stroke={G} /></Svg></div>
      ))}
      <div className="mt-[3px] h-px w-[21px] shrink-0 bg-[#a0a0a0]" />
      <div className="mt-[6px]"><Svg off><path d="M1 2h14v13H1z" fill={G} stroke="none" /><path d="M0 4.500h16M0 8.500h16M0 12.500h16" stroke={G} strokeDasharray="1 14" /><path d="M2 .500h13" stroke={G} strokeDasharray="1 1" /></Svg></div>
      <div className="mt-[4px] border-y-[3px] border-l-[3px] border-y-transparent border-l-[#a0a0a0]" />
      <div className="mt-[8px] h-px w-[21px] shrink-0 bg-[#a0a0a0]" />
      <div className="mt-[9px]"><Svg off><path d="M1 7l5 5 8-7M3 4l4 5M8 3l6 3M5 13l7-5" stroke={G} strokeDasharray="3 1" /></Svg></div>
      <div className="mt-[7px] h-px w-[21px] shrink-0 bg-[#a0a0a0]" />
      <div className="mt-[7px]"><Svg off><circle cx="4.500" cy="11" r="3" stroke={G} strokeWidth="2" /><path d="M6 9l3-6" stroke={G} strokeWidth="2" /><path d="M9 3l2-2 2 2 2-1M9 12.500h7" stroke={G} /></Svg></div>
    </div>
  );
}

/* ---------- spreadsheet view and status bar ---------- */
const sheetTabs = [["Nets", 25, "w-[46px] border-l pl-[4px]"], ["Components", 71, "ml-[2px] w-[82px] pl-[4px]"], ["Copper layers", 79, "ml-[2px] w-[89px] pl-[4px]"], ["Simulation", 60, "ml-[2px] w-[71px] pl-[4px]"]] as const;

function Spreadsheet() {
  return (
    <div className="flex h-[178px] shrink-0">
      <div className="flex w-[32px] shrink-0 flex-col">
        <div className="ml-[7px] mt-[2px] flex flex-col gap-[2px]">
          <MiniBtn><MiniX /></MiniBtn>
          <MiniBtn><div className="border-y-[3px] border-l-[3px] border-y-transparent border-l-[#a0a0a0]" /></MiniBtn>
        </div>
        <div className="ml-[2px] mt-[4px] flex h-[138px] w-[25px] shrink-0 items-end bg-[linear-gradient(0deg,#bccada,#d6e4f2)] pb-[3px]">
          <Label w={119} vertical className="rotate-180 text-[13.500px] leading-[18px] [writing-mode:vertical-rl]">Spreadsheet View</Label>
        </div>
      </div>
      <div className="flex w-[1883px] flex-col pt-[5px]">
        <div className="h-[145px] shrink-0 border-b-2 border-r-2 border-t border-b-[#696969] border-r-[#808080] border-t-white pr-[2px] pt-px">
          <div className="h-[140px] border border-[#828790] bg-white pl-[23px] pt-[3px]"><Label w={267} className="text-[13.500px] leading-[21px]">Multisim  -  24 August 2020, 10.57.18 PM</Label></div>
        </div>
        <div className="flex items-start text-[12.500px] leading-[18px]">
          <div className="flex h-[22px] w-[54px] items-center border-b border-r border-[#696969] pl-[6px] pt-[5px]"><Label w={41}>Results</Label></div>
          {sheetTabs.map(([t, w, c]) => (
            <div key={t} className={`flex h-[21px] items-center border-b-2 border-r-2 border-[#696969] pt-[2px] ${c}`}><Label w={w}>{t}</Label></div>
          ))}
        </div>
      </div>
    </div>
  );
}

function StatusBar() {
  return (
    <div className="flex h-6 shrink-0 flex-col border-t border-[#a0a0a0]">
      <div className="mt-px flex flex-1 border-t border-[#d7d7d7] pt-[2px] text-[14px] leading-5">
        <div className="w-[1490px] border-r border-[#d7d7d7] pl-[1341px]">-</div>
        <div className="w-[183px] overflow-hidden border-r border-[#d7d7d7] pl-[4px]"><Label w={180}>half_subtractor_using_basic</Label></div>
        <div className="w-[183px] border-r border-[#d7d7d7] pl-[5px]"><Label w={80}>Tran: 1.301 s</Label></div>
        <div className="ml-[3px] mt-px flex h-4 gap-[2px] border border-[#e3e3e3] p-px">
          {cols.map((c) => <div key={c} className="h-[13px] w-[6px] border border-b-white border-l-[#a0a0a0] border-r-white border-t-[#a0a0a0]" />)}
        </div>
      </div>
    </div>
  );
}

export default function App() {
  return (
    <div className="flex h-[1080px] w-[1920px] flex-col overflow-hidden bg-[#f0f0f0] text-black [font-family:'Open_Sans','Noto_Sans',sans-serif]">
      <Taskbar />
      <Header />
      <Toolbars />
      <div className="flex h-[705px] shrink-0">
        <DesignToolbox />
        <Workspace />
        <Instruments />
      </div>
      <div className="h-px shrink-0 bg-[#696969]" />
      <Spreadsheet />
      <StatusBar />
    </div>
  );
}
